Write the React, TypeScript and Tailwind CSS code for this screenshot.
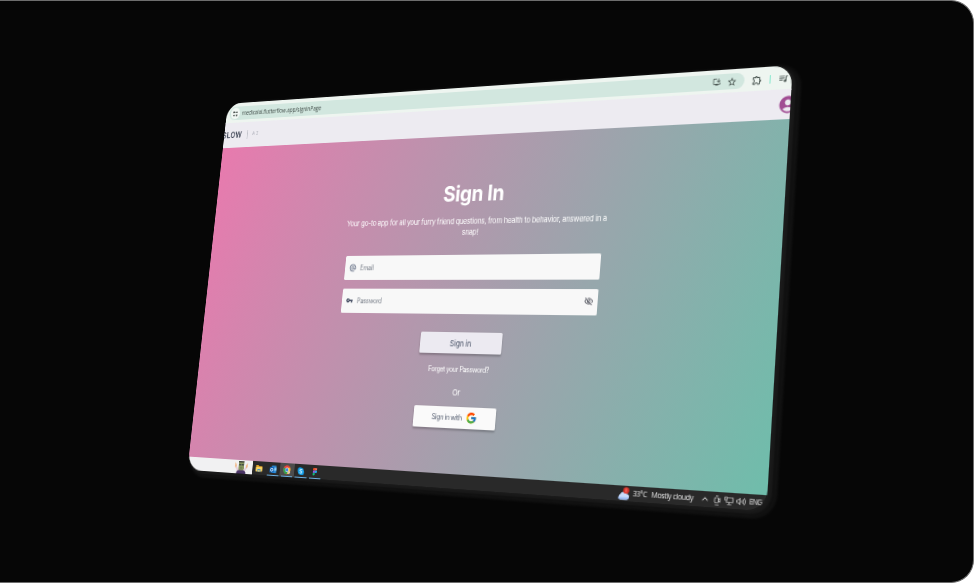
import React from "react";
import {
  MdAccountCircle,
  MdAlternateEmail,
  MdInstallDesktop,
  MdOutlineExtension,
  MdOutlineVisibilityOff,
  MdQueueMusic,
  MdStarBorder,
  MdVpnKey,
} from "react-icons/md";
import { FcGoogle } from "react-icons/fc";

type Point = [number, number];

const SCREEN_W = 640;
const SCREEN_H = 400;

/* Corners of the tilted screen: top-left, top-right, bottom-right, bottom-left. */
const CORNERS: [Point, Point, Point, Point] = [
  [227.8, 103.8],
  [792.8, 65.1],
  [766.4, 511.5],
  [187.4, 469.8],
];

function perspectiveMatrix(w: number, h: number, q: [Point, Point, Point, Point]): string {
  const [[x0, y0], [x1, y1], [x2, y2], [x3, y3]] = q;
  const dx1 = x1 - x2;
  const dx2 = x3 - x2;
  const sx = x0 - x1 + x2 - x3;
  const dy1 = y1 - y2;
  const dy2 = y3 - y2;
  const sy = y0 - y1 + y2 - y3;
  const det = dx1 * dy2 - dx2 * dy1;
  const g = (sx * dy2 - dx2 * sy) / det;
  const k = (dx1 * sy - sx * dy1) / det;
  const a = x1 - x0 + g * x1;
  const b = x3 - x0 + k * x3;
  const d = y1 - y0 + g * y1;
  const e = y3 - y0 + k * y3;
  const m = [a / w, d / w, 0, g / w, b / h, e / h, 0, k / h, 0, 0, 1, 0, x0, y0, 0, 1];
  return `matrix3d(${m.map((n) => n.toFixed(9)).join(",")})`;
}

function BrowserBar() {
  return (
    <div className="flex h-[46px] shrink-0 items-center bg-[#eef5f0] pl-[8px]">
      <div className="flex h-[31px] w-[1181px] shrink-0 items-center rounded-full bg-[#d2e7df] pl-[3px] pr-[13px]">
        <div className="flex size-[25px] items-center justify-center rounded-full bg-[#f2f8f4]">
          <svg viewBox="0 0 16 16" className="size-[16px]" fill="none" stroke="#38403d" strokeWidth="2">
            <path d="M7.500 4.500H14M2 11.500h6.500" />
            <circle cx="4" cy="4.500" r="1.200" />
            <circle cx="12" cy="11.500" r="1.200" />
          </svg>
        </div>
        <span className="ml-[6px] pt-[2px] font-['Open_Sans',sans-serif] text-[13px] tracking-[-0.330px] text-[#44504c]">
          medicalai.flutterflow.app/signinPage
        </span>
        <MdInstallDesktop className="ml-auto size-[17px] text-[#46524e]" />
        <MdStarBorder className="ml-[11px] size-[20px] text-[#46524e]" />
      </div>
      <MdOutlineExtension className="ml-[14px] size-[20px] shrink-0 text-[#46524e]" />
      <div className="ml-[15px] h-[16px] w-[2px] shrink-0 bg-[#8ce8cf]" />
      <MdQueueMusic className="ml-[14px] size-[20px] shrink-0 text-[#46524e]" />
    </div>
  );
}

function SiteHeader() {
  return (
    <div className="z-10 -mt-[2px] flex h-[56px] shrink-0 items-center overflow-hidden bg-[#edebf1]">
      <span className="-ml-[5px] w-[54px] pt-[1px] text-[17px] font-semibold tracking-[0.800px] text-[#3b4252]">SLOW</span>
      <div className="ml-[12px] h-[20px] w-[2px] bg-[#c4c5cc]" />
      <span className="ml-[13px] pt-[2px] font-['Liberation_Mono',monospace] text-[11px] tracking-[3px] text-[#a9abb5]">AI</span>
      <MdAccountCircle className="-mr-[14px] ml-auto size-[38px] shrink-0 text-[#a14c93]" />
    </div>
  );
}

function SignInForm() {
  return (
    <div className="-my-[4px] flex flex-1 flex-col items-center bg-[linear-gradient(110deg,#e87aae_0%,#6fbdab_100%)] bg-no-repeat pt-[98px]">
      <h1 className="text-[43px] font-bold leading-[50px] tracking-[-0.700px] text-white">Sign In</h1>
      <p className="mt-[19px] w-[610px] text-center text-[15px] leading-[22px] tracking-[-0.400px] text-white">
        Your go-to app for all your furry friend questions, from health to behavior, answered in a snap!
      </p>
      <div className="mt-[35px] flex h-[50px] w-[577px] items-center rounded-[3px] bg-[#f8f8f8] pl-[10px]">
        <MdAlternateEmail className="size-[18px] text-[#56627a]" />
        <span className="ml-[9px] pt-[3px] text-[14px] tracking-[-0.500px] text-[#7c828c]">Email</span>
      </div>
      <div className="mt-[17px] flex h-[50px] w-[577px] items-center rounded-[3px] bg-[#f8f8f8] pl-[10px] pr-[10px]">
        <MdVpnKey className="size-[17px] text-[#3c465c]" />
        <span className="ml-[10px] pt-[3px] text-[14px] tracking-[-0.650px] text-[#7c828c]">Password</span>
        <MdOutlineVisibilityOff className="ml-auto size-[19px] text-[#50525c]" />
      </div>
      <div className="mt-[37px] flex h-[41px] w-[185px] items-center justify-center rounded-[3px] bg-[#eceaf1] pt-[2px] text-[16px] tracking-[-0.500px] text-[#4a5468] shadow-[0_3px_4px_rgba(0,0,0,0.22)]">
        Sign in
      </div>
      <span className="mt-[21px] text-[14px] leading-[22px] tracking-[-0.750px] text-white">Forget your Password?</span>
      <span className="mt-[23px] text-[16px] leading-[22px] tracking-[-0.500px] text-white">Or</span>
      <div className="mt-[17px] flex h-[41px] w-[184px] items-center justify-center rounded-[3px] bg-[#fafafa] text-[14px] tracking-[-0.700px] text-[#5c6576] shadow-[0_3px_4px_rgba(0,0,0,0.22)]">
        <span className="pt-[2px]">Sign in with</span>
        <FcGoogle className="ml-[8px] size-[25px]" />
      </div>
    </div>
  );
}

function TaskIcon({ active, open, children }: { active?: boolean; open?: boolean; children: React.ReactNode }) {
  return (
    <div className={`flex h-full w-[35px] flex-col items-center justify-between ${active ? "bg-[#4c4c4c]" : ""}`}>
      <div className="flex flex-1 items-center pt-[2px]">{children}</div>
      <div className={`h-[2px] w-[29px] ${open ? "bg-[#6fb0e0]" : ""}`} />
    </div>
  );
}

function Mascot() {
  return (
    <svg viewBox="0 0 38 28" className="ml-[122px] h-[28px] w-[38px]">
      <path d="M3 5l4 6-1 6-3-3zM35 5l-4 6 1 6 3-3z" fill="#f2a765" />
      <path d="M7 12l6 8-4 4-4-8zM31 12l-6 8 4 4 4-8z" fill="#e6cdd9" />
      <path d="M7 28c0-6 4-8 12-8s12 2 12 8z" fill="#4b3566" />
      <rect x="12" y="2" width="14" height="19" rx="4" fill="#87965f" />
      <path d="M12 2h14v3H12z" fill="#42463a" />
      <path d="M12.500 8h6v3h-6zM19.500 8h6v3h-6z" fill="#434a45" />
      <path d="M16 16h6" stroke="#5d6944" strokeWidth="1.500" />
    </svg>
  );
}

function Taskbar() {
  return (
    <div className="z-10 flex h-[28px] shrink-0 items-center bg-[#292929] pr-[10px] font-['Open_Sans',sans-serif] text-[#e6e6e6]">
      <div className="flex h-full w-[170px] bg-[#f1f1f2]">
        <Mascot />
      </div>
      <TaskIcon>
        <svg viewBox="0 0 18 16" className="h-[16px] w-[18px]">
          <path d="M1 2h6l2 2h8v10H1z" fill="#e9a92c" />
          <path d="M1 6h16v9H1z" fill="#fbd766" />
          <path d="M5 10h8v5H5z" fill="#3f8fd6" />
          <path d="M7 12h4v3H7z" fill="#fbd766" />
        </svg>
      </TaskIcon>
      <TaskIcon open>
        <svg viewBox="0 0 18 18" className="size-[18px]">
          <rect x="5" y="1" width="12" height="15" rx="1" fill="#2a8ad8" />
          <path d="M11 5h6v6h-6z" fill="#8fd0f7" />
          <rect x="0" y="4" width="11" height="11" rx="1" fill="#0f62b5" />
          <circle cx="5.500" cy="9.500" r="2.700" fill="none" stroke="#fff" strokeWidth="1.700" />
        </svg>
      </TaskIcon>
      <TaskIcon active open>
        <svg viewBox="0 0 20 20" className="size-[19px]">
          <circle cx="10" cy="10" r="9.500" fill="#e8453c" />
          <path d="M1.800 5.200A9.500 9.500 0 0 0 10 19.500l4-7z" fill="#2ea44f" />
          <path d="M18.500 6H10l4 6.500-4 7A9.500 9.500 0 0 0 18.500 6z" fill="#fbc52c" />
          <circle cx="10" cy="10" r="4.500" fill="#fff" />
          <circle cx="10" cy="10" r="3.500" fill="#3b82e8" />
          <circle cx="15.500" cy="15.500" r="3.500" fill="#d9c7b4" />
        </svg>
      </TaskIcon>
      <TaskIcon open>
        <svg viewBox="0 0 18 18" className="size-[17px]">
          <circle cx="6" cy="6" r="5.500" fill="#0d8fdb" />
          <circle cx="12" cy="12" r="5.500" fill="#0d8fdb" />
          <circle cx="9" cy="9" r="7.500" fill="#1ba3ea" />
          <path d="M12 6.500C10.500 4.500 6 5 6 7s6 1.500 6 4-5 2.500-6.200.3" fill="none" stroke="#fff" strokeWidth="1.500" />
        </svg>
      </TaskIcon>
      <TaskIcon open>
        <svg viewBox="0 0 12 18" className="h-[15px] w-[10px]">
          <path d="M6 0H3a3 3 0 0 0 0 6h3z" fill="#f24e1e" />
          <path d="M6 0h3a3 3 0 0 1 0 6H6z" fill="#ff7262" />
          <path d="M6 6H3a3 3 0 0 0 0 6h3z" fill="#a259ff" />
          <circle cx="9" cy="9" r="3" fill="#1abcfe" />
          <path d="M6 12H3a3 3 0 1 0 3 3z" fill="#0acf83" />
        </svg>
      </TaskIcon>

      <div className="ml-auto flex h-full items-center pt-[1px]">
        <svg viewBox="0 0 24 24" className="size-[25px]">
          <path d="M6 22a5 5 0 0 1 0-9 6.500 6.500 0 0 1 12-1 5 5 0 0 1 0 10z" fill="#c9dcfb" />
          <path d="M1.500 18a5 5 0 0 0 4.500 4h12a5 5 0 0 0 4.500-4z" fill="#9dbdf4" />
          <circle cx="17" cy="6" r="5.700" fill="#d9352b" />
          <path d="M17 3v6" stroke="#f7a49d" strokeWidth="1.300" />
        </svg>
        <span className="ml-[6px] w-[28px] whitespace-nowrap text-[14px] tracking-[-0.900px]">33°C</span>
        <span className="ml-[8px] w-[80px] whitespace-nowrap text-[14px] tracking-[-0.700px]">Mostly cloudy</span>
        <svg viewBox="0 0 12 12" className="ml-[17px] size-[12px]" fill="none" stroke="#e0e0e0" strokeWidth="1.400">
          <path d="M1 8.500l5-5 5 5" />
        </svg>
        <svg viewBox="0 0 14 18" className="ml-[9px] h-[18px] w-[14px]" fill="none" stroke="#e0e0e0" strokeWidth="1.300">
          <rect x="2" y="4" width="7" height="9" rx="2" />
          <path d="M4 1.500h5M9 7l3-1.500v6L9 10M3 16.500h7" />
        </svg>
        <svg viewBox="0 0 17 16" className="ml-[7px] h-[16px] w-[17px]" fill="none" stroke="#e0e0e0" strokeWidth="1.400">
          <path d="M6 3h10v8H4V8M9 11v3M5.500 14.500h8" />
          <rect x="1" y="2" width="4" height="5" />
        </svg>
        <svg viewBox="0 0 18 16" className="ml-[5px] h-[16px] w-[18px]" fill="none" stroke="#e0e0e0" strokeWidth="1.300">
          <path d="M1 6h2.500L7 3v10l-3.500-3H1zM9.500 6c1 1 1 3 0 4M12 4c2 2 2 6 0 8M14.500 2c3 3 3 9 0 12" />
        </svg>
        <span className="ml-[6px] w-[22px] whitespace-nowrap text-[13px] tracking-[-1.200px]">ENG</span>
      </div>
    </div>
  );
}

export default function App() {
  return (
    <div className="h-[583px] w-[974px] overflow-hidden bg-white font-['Inter',sans-serif]">
      <div className="h-[583px] w-[974px] overflow-hidden rounded-r-[23px] border-y border-r border-[#6d6d6d] bg-[#060606]">
        <div
          className="-mt-px h-[400px] w-[640px] origin-top-left rounded-[18px] shadow-[3px_2px_2px_1px_#1a1a1a,5px_3px_2px_4px_#101010]"
          style={{ transform: perspectiveMatrix(SCREEN_W, SCREEN_H, CORNERS) }}
        >
          <div className="h-[400px] w-[640px] overflow-hidden rounded-[18px]">
            <div className="flex h-[800px] w-[1280px] flex-col [zoom:0.5]">
              <BrowserBar />
              <SiteHeader />
              <SignInForm />
              <Taskbar />
            </div>
          </div>
        </div>
      </div>
    </div>
  );
}
